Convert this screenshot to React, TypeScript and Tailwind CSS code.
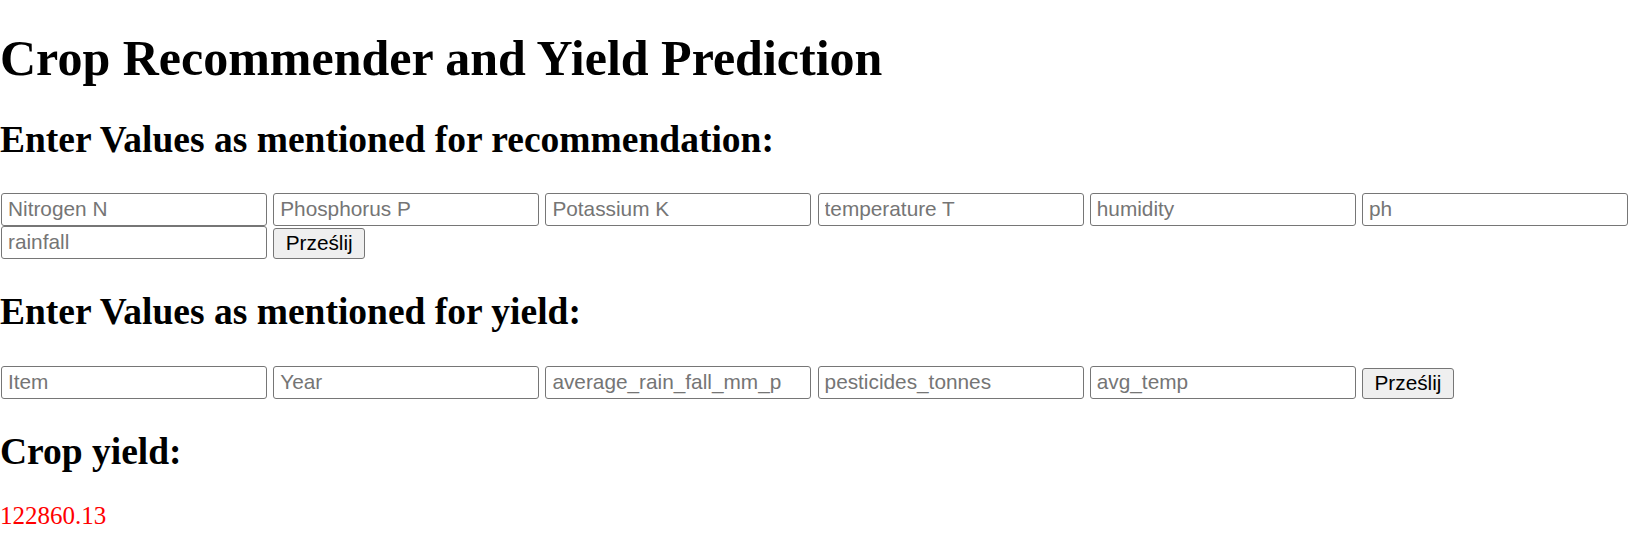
import React from "react";

const inputCls =
  "w-[266px] h-[33px] box-border border-[1.5px] border-solid border-[#767676] rounded-[3px] bg-white px-[6px] text-[20.8px] text-black placeholder:text-[#757575] [font-family:'Liberation_Sans',Arial,sans-serif] outline-none";

const btnCls =
  "self-end h-[30.5px] box-border border-[1.5px] border-solid border-[#767676] rounded-[3px] bg-[#efefef] px-[11.5px] text-[20.8px] leading-none text-black [font-family:'Liberation_Sans',Arial,sans-serif]";

export default function App() {
  const rec = [
    "Nitrogen N",
    "Phosphorus P",
    "Potassium K",
    "temperature T",
    "humidity",
    "ph",
    "rainfall",
  ];
  const yieldFields = [
    "Item",
    "Year",
    "average_rain_fall_mm_p",
    "pesticides_tonnes",
    "avg_temp",
  ];
  return (
    <div className="min-h-[552px] bg-white text-black pt-[30px] [font-family:'Liberation_Serif','Times_New_Roman',serif]">
      <h1 className="m-0 text-[50px] leading-[56px] font-bold">
        Crop Recommender and Yield Prediction
      </h1>
      <h2 className="m-0 mt-[33.4px] text-[37.5px] leading-[42px] font-bold">
        Enter Values as mentioned for recommendation:
      </h2>
      <form
        className="mt-[31.6px] ml-[1px] flex flex-wrap gap-x-[6.2px] w-[1640px]"
        onSubmit={(e) => e.preventDefault()}
      >
        {rec.map((p) => (
          <input key={p} type="text" placeholder={p} className={inputCls} />
        ))}
        <button type="submit" className={btnCls}>
          Prześlij
        </button>
      </form>
      <h2 className="m-0 mt-[32.3px] text-[37.5px] leading-[42px] font-bold">
        Enter Values as mentioned for yield:
      </h2>
      <form
        className="mt-[32.7px] ml-[1px] flex flex-wrap gap-x-[6.2px] w-[1640px]"
        onSubmit={(e) => e.preventDefault()}
      >
        {yieldFields.map((p) => (
          <input key={p} type="text" placeholder={p} className={inputCls} />
        ))}
        <button type="submit" className={btnCls}>
          Prześlij
        </button>
      </form>
      <h2 className="m-0 mt-[32.5px] text-[37.5px] leading-[42px] font-bold">
        Crop yield:
      </h2>
      <p className="m-0 mt-[27.5px] text-[25px] leading-[29px] text-[#ff0000]">
        122860.13
      </p>
    </div>
  );
}
